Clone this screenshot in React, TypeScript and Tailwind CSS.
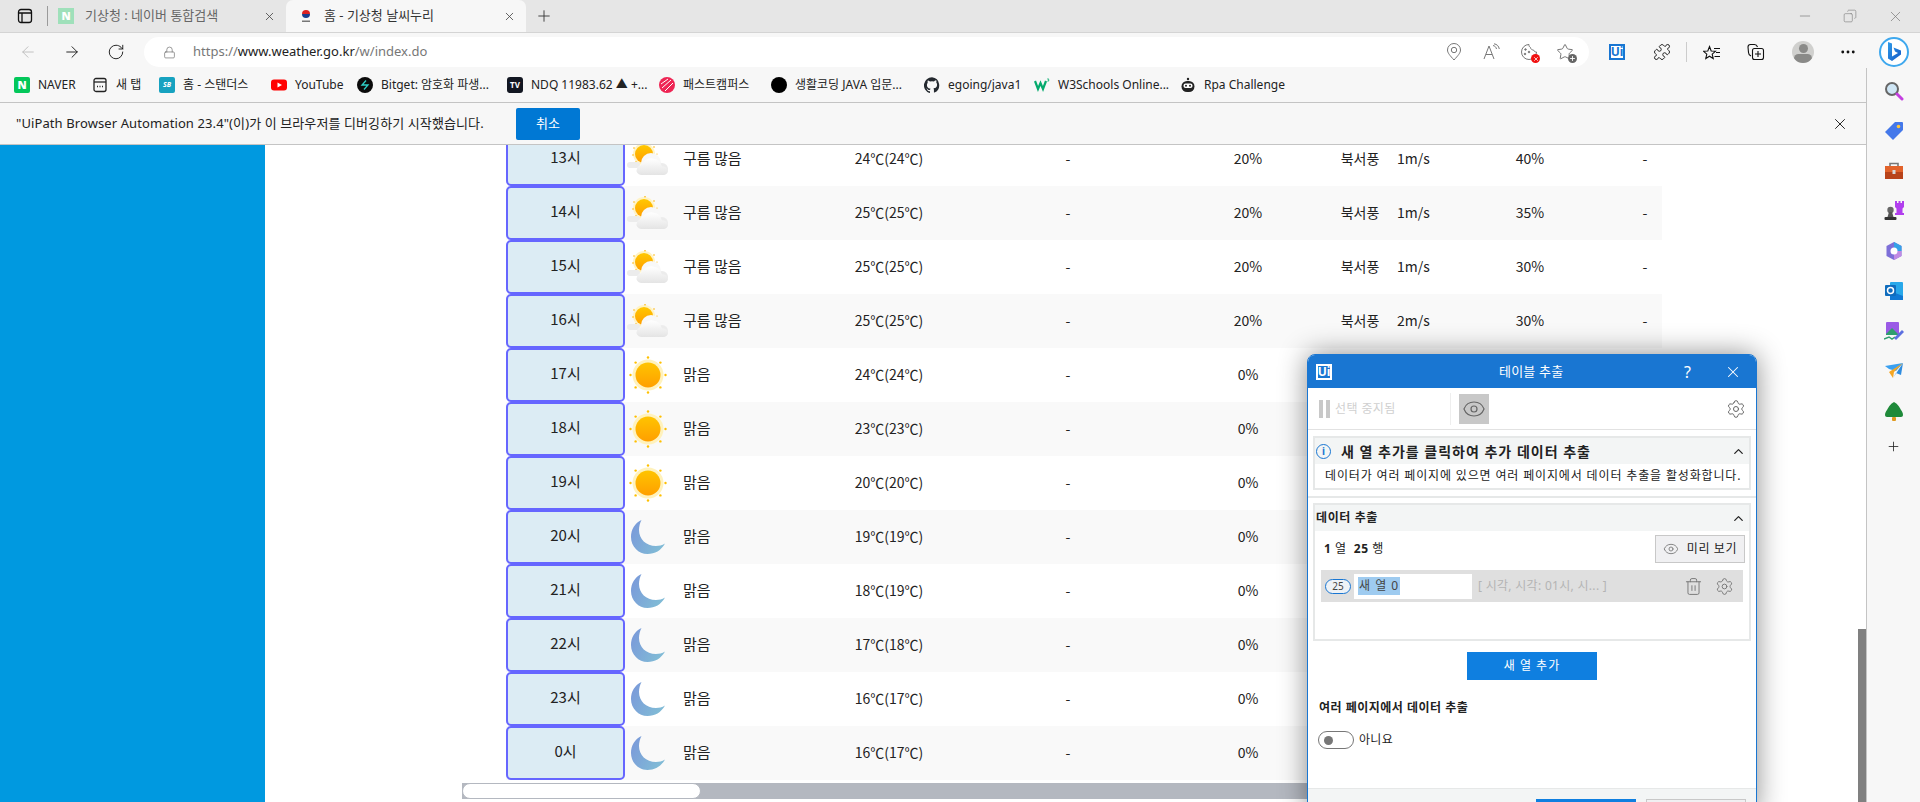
import { ArrowLeft, ArrowRight, ChevronUp, Copy, Eye, Lock, Minus, MoreHorizontal, Plus, Puzzle, RotateCw, Settings, Star, Trash2, X } from "lucide-react";
import type { ReactNode } from "react";

const uiFont = "font-['Noto_Sans','Noto_Sans_CJK_KR',sans-serif]";
const pageFont = "font-['Noto_Sans_CJK_KR','Noto_Sans',sans-serif]";

const CloudSun = () => (
    <svg width="42" height="34" viewBox="0 0 42 34">
        <defs>
            <linearGradient id="sunA" x1="0" y1="0" x2="0" y2="1">
                <stop offset="0" stopColor="#ffc800" />
                <stop offset="1" stopColor="#ff9d00" />
            </linearGradient>
            <linearGradient id="cloudA" x1="0" y1="0" x2="0" y2="1">
                <stop offset="0" stopColor="#ffffff" />
                <stop offset="1" stopColor="#e4e4e4" />
            </linearGradient>
        </defs>
        <circle cx="17" cy="12" r="11" fill="#fff3c4" />
        <circle cx="17" cy="12" r="9" fill="url(#sunA)" />
        <g fill="#ffb400">
            <circle cx="18" cy="0.8" r="0.8" />
            <circle cx="7" cy="6" r="0.8" />
            <circle cx="6" cy="13" r="0.8" />
            <circle cx="9" cy="20" r="0.8" />
            <circle cx="27" cy="5" r="0.8" />
            <circle cx="30" cy="12" r="0.6" />
        </g>
        <rect x="0" y="20" width="13" height="6" rx="3" fill="#ececec" />
        <circle cx="24" cy="21" r="10" fill="#f8f8f8" />
        <circle cx="35" cy="27" r="6" fill="#ececec" />
        <path d="M14 33a4.500 4.500 0 0 1-4-6.500 5 5 0 0 1 5-3.500 10.500 10.500 0 0 1 20 1.500 5 5 0 0 1 6 4.500 4.500 4.500 0 0 1-5 4z" fill="url(#cloudA)" />
    </svg>
);

const Sun = () => (
    <svg width="38" height="38" viewBox="0 0 38 38">
        <defs>
            <linearGradient id="sunB" x1="0" y1="0" x2="0" y2="1">
                <stop offset="0" stopColor="#ffc400" />
                <stop offset="1" stopColor="#ff9f00" />
            </linearGradient>
        </defs>
        <circle cx="19" cy="19" r="15.500" fill="#fff2bd" />
        <circle cx="19" cy="19" r="12.500" fill="url(#sunB)" />
        <g fill="#ffc000">
            <circle cx="19" cy="1.500" r="1.200" />
            <circle cx="19" cy="36.500" r="1.200" />
            <circle cx="1.500" cy="19" r="1.200" />
            <circle cx="36.500" cy="19" r="1.200" />
            <circle cx="6.600" cy="6.600" r="1.200" />
            <circle cx="31.400" cy="6.600" r="1.200" />
            <circle cx="6.600" cy="31.400" r="1.200" />
            <circle cx="31.400" cy="31.400" r="1.200" />
        </g>
    </svg>
);

const Moon = () => (
    <svg width="34" height="34" viewBox="0 0 34 34">
        <defs>
            <linearGradient id="moonA" x1="0" y1="0" x2="1" y2="0.500">
                <stop offset="0" stopColor="#7a97da" />
                <stop offset="1" stopColor="#80bad6" />
            </linearGradient>
        </defs>
        <path d="M10.500 0C4 3 0 9.500 0 17c0 9.500 7.500 17 16.500 17 7.500 0 13.500-3.500 17.500-10.500-3 1.800-6 2.500-9 2.500C15 26 8 19 8 10c0-3.500 1-7 2.500-10z" fill="url(#moonA)" />
    </svg>
);

const UiLogo = ({ className }: { className: string }) => (
    <div className={`flex items-center justify-center border-2 text-[12px] font-bold leading-none ${className}`}>Ui</div>
);

const Taegeuk = () => (
    <svg width="12" height="16" viewBox="0 0 12 16">
        <path d="M2 6a4 4 0 0 1 8 0z" fill="#d22" />
        <path d="M2 6a4 4 0 0 0 8 0z" fill="#1a3f8f" />
        <rect x="2" y="12.500" width="8" height="1.500" fill="#777" />
    </svg>
);

const Mark = ({ className, children }: { className: string; children?: ReactNode }) => (
    <div className={`flex h-4 w-4 shrink-0 items-center justify-center ${className}`}>{children}</div>
);

const bookmarks = [
    { w: "w-[78px]", label: "NAVER", icon: <Mark className="rounded-[2px] bg-[#03c75a] text-[11px] font-black text-white">N</Mark> },
    {
        w: "w-[67px]", label: "새 탭", icon: (
            <svg width="16" height="16" viewBox="0 0 16 16" fill="none" stroke="#222" strokeWidth="1.300">
                <rect x="2" y="1.500" width="12" height="13" rx="2" />
                <path d="M2 5h12" />
                <path d="M5 9.500h1M7.500 9.500h1M10 9.500h1" />
            </svg>
        )
    },
    { w: "w-[112px]", label: "홈 - 스탠더스", icon: <Mark className="rounded-[2px] bg-[#17a2c0] text-[7px] font-bold italic text-white">SB</Mark> },
    {
        w: "w-[86px]", label: "YouTube", icon: (
            <svg width="16" height="16" viewBox="0 0 16 16">
                <rect x="0" y="2.500" width="16" height="11" rx="3" fill="#f00" />
                <path d="M6.500 5.500v5L11 8z" fill="#fff" />
            </svg>
        )
    },
    {
        w: "w-[150px]", label: "Bitget: 암호화 파생...", icon: (
            <svg width="16" height="16" viewBox="0 0 16 16" fill="none">
                <circle cx="8" cy="8" r="8" fill="#0b0b0b" />
                <path d="M9 3.500 5 8h3M7 12.500 11 8H8" stroke="#2fd0c8" strokeWidth="1.300" />
            </svg>
        )
    },
    { w: "w-[152px]", label: "NDQ 11983.62 ▲ +...", icon: <Mark className="rounded-[3px] bg-[#131722] text-[8px] font-bold text-white">TV</Mark> },
    {
        w: "w-[112px]", label: "패스트캠퍼스", icon: (
            <svg width="16" height="16" viewBox="0 0 16 16" fill="none">
                <circle cx="8" cy="8" r="8" fill="#ee2554" />
                <path d="M2 7l7-5M3 11l9-8M6 14l8-8" stroke="#fff" strokeWidth="1" />
            </svg>
        )
    },
    { w: "w-[153px]", label: "생활코딩 JAVA 입문...", icon: <Mark className="rounded-full bg-black" /> },
    {
        w: "w-[110px]", label: "egoing/java1", icon: (
            <svg width="16" height="16" viewBox="0 0 24 24" fill="#24292f">
                <path d="M12 .5a12 12 0 0 0-3.800 23.400c.6.100.8-.3.800-.6v-2.100c-3.300.7-4-1.600-4-1.600-.5-1.400-1.300-1.800-1.300-1.800-1.100-.7.100-.7.100-.7 1.200.1 1.800 1.200 1.800 1.200 1.100 1.800 2.800 1.300 3.500 1 .1-.8.400-1.300.8-1.600-2.700-.3-5.500-1.300-5.500-5.900 0-1.300.5-2.400 1.200-3.200-.1-.3-.5-1.500.1-3.200 0 0 1-.3 3.300 1.200a11.500 11.500 0 0 1 6 0C17.300 4.700 18.300 5 18.300 5c.7 1.700.2 2.900.1 3.200.8.800 1.200 1.900 1.200 3.200 0 4.600-2.800 5.600-5.500 5.900.4.400.8 1.100.8 2.200v3.300c0 .3.200.7.800.6A12 12 0 0 0 12 .5z" />
            </svg>
        )
    },
    {
        w: "w-[146px]", label: "W3Schools Online...", icon: (
            <svg width="16" height="16" viewBox="0 0 16 16" fill="none">
                <path d="M1 4l3 8 2.500-6L9 12l3-8" stroke="#04aa6d" strokeWidth="2.200" />
                <path d="M13 2h2l-1 1.500h1L13.500 5" stroke="#04aa6d" strokeWidth="0.700" />
            </svg>
        )
    },
    {
        w: "w-[110px]", label: "Rpa Challenge", icon: (
            <svg width="16" height="16" viewBox="0 0 16 16">
                <circle cx="8" cy="2" r="1.200" fill="#222" />
                <rect x="1.500" y="4" width="13" height="11" rx="5.500" fill="#222" />
                <rect x="3.500" y="6.500" width="9" height="4.500" rx="2" fill="#fff" />
                <circle cx="6" cy="8.700" r="1" fill="#222" />
                <circle cx="10" cy="8.700" r="1" fill="#222" />
            </svg>
        )
    },
];

const rows = [
    { time: "13시", sky: "cloud", desc: "구름 많음", temp: "24℃(24℃)", pop: "20%", dir: "북서풍", speed: "1m/s", hum: "40%", last: "-" },
    { time: "14시", sky: "cloud", desc: "구름 많음", temp: "25℃(25℃)", pop: "20%", dir: "북서풍", speed: "1m/s", hum: "35%", last: "-" },
    { time: "15시", sky: "cloud", desc: "구름 많음", temp: "25℃(25℃)", pop: "20%", dir: "북서풍", speed: "1m/s", hum: "30%", last: "-" },
    { time: "16시", sky: "cloud", desc: "구름 많음", temp: "25℃(25℃)", pop: "20%", dir: "북서풍", speed: "2m/s", hum: "30%", last: "-" },
    { time: "17시", sky: "sun", desc: "맑음", temp: "24℃(24℃)", pop: "0%" },
    { time: "18시", sky: "sun", desc: "맑음", temp: "23℃(23℃)", pop: "0%" },
    { time: "19시", sky: "sun", desc: "맑음", temp: "20℃(20℃)", pop: "0%" },
    { time: "20시", sky: "moon", desc: "맑음", temp: "19℃(19℃)", pop: "0%" },
    { time: "21시", sky: "moon", desc: "맑음", temp: "18℃(19℃)", pop: "0%" },
    { time: "22시", sky: "moon", desc: "맑음", temp: "17℃(18℃)", pop: "0%" },
    { time: "23시", sky: "moon", desc: "맑음", temp: "16℃(17℃)", pop: "0%" },
    { time: "0시", sky: "moon", desc: "맑음", temp: "16℃(17℃)", pop: "0%" },
];

const SideIcon = ({ children }: { children: ReactNode }) => (
    <div className="flex h-10 w-full items-center justify-center">{children}</div>
);

const Sidebar = () => (
    <aside className="flex w-[54px] shrink-0 flex-col items-center border-l border-[#c4c4c4] bg-[#f7f7f7] pt-[3px]">
        <SideIcon>
            <svg width="20" height="20" viewBox="0 0 20 20" fill="none">
                <circle cx="8" cy="8" r="6" fill="#cfe6f5" stroke="#666" strokeWidth="2" />
                <path d="M13 13l5 5" stroke="#c43fe0" strokeWidth="3" strokeLinecap="round" />
            </svg>
        </SideIcon>
        <SideIcon>
            <svg width="20" height="20" viewBox="0 0 20 20">
                <path d="M11 1h7a1 1 0 0 1 1 1v7L9 19 1 11z" fill="#4478ea" />
                <circle cx="14.500" cy="5.500" r="1.800" fill="#ffc83d" />
            </svg>
        </SideIcon>
        <SideIcon>
            <svg width="20" height="20" viewBox="0 0 20 20">
                <path d="M6 5V2.500h8V5" fill="none" stroke="#777" strokeWidth="1.600" />
                <rect x="1" y="5" width="18" height="6" fill="#e2622a" />
                <rect x="1" y="11" width="18" height="7" fill="#b8431a" />
                <rect x="8.500" y="9" width="3" height="4" fill="#d8d8d8" />
            </svg>
        </SideIcon>
        <SideIcon>
            <svg width="20" height="20" viewBox="0 0 20 20">
                <circle cx="6.500" cy="9" r="3.200" fill="#666" />
                <path d="M5 11h3l1.500 5h-6z" fill="#555" />
                <rect x="0.500" y="16" width="12" height="3" rx="1" fill="#333" />
                <path d="M11 0h2v2h1.500V0h2v2H18V0h2v6l-1.500 1.500V12H20v2h-9v-2h1.500V7.500L11 6z" fill="#b13fee" />
            </svg>
        </SideIcon>
        <SideIcon>
            <svg width="20" height="20" viewBox="0 0 20 20" fill="none">
                <path d="M10 1l7.500 4v10L10 19l-7.500-4V5z" fill="#7d6fd8" />
                <path d="M10 1l7.500 4v5H10z" fill="#35a2e8" />
                <path d="M10 19l7.500-4v-5H10z" fill="#c08be4" />
                <circle cx="10" cy="10" r="3.500" fill="#fff" />
            </svg>
        </SideIcon>
        <SideIcon>
            <svg width="20" height="20" viewBox="0 0 20 20">
                <rect x="6" y="1" width="13" height="18" rx="1" fill="#28a8ea" />
                <path d="M6 10l13 5v4H6z" fill="#0f78d4" />
                <rect x="1" y="4" width="11" height="11" rx="1" fill="#0f6cbd" />
                <circle cx="6.500" cy="9.500" r="3" fill="none" stroke="#fff" strokeWidth="1.500" />
            </svg>
        </SideIcon>
        <SideIcon>
            <svg width="20" height="20" viewBox="0 0 20 20">
                <rect x="2" y="1" width="13" height="13" rx="1" fill="#9a5ae6" />
                <path d="M2 13l6-6 6 6v1H2z" fill="#2f9e6e" />
                <path d="M0 18l5-2 3 2 3-2" fill="none" stroke="#2f9e6e" strokeWidth="1.500" />
                <path d="M10 17l8-8 2 2-8 8z" fill="#5c6fe0" />
            </svg>
        </SideIcon>
        <SideIcon>
            <svg width="20" height="20" viewBox="0 0 20 20">
                <path d="M1 5l18-3-7 8-7-2z" fill="#3aa0f0" />
                <path d="M5 11l14-9-9 9-1 6z" fill="#f5a623" />
                <path d="M9 17l3-5 5 2 2-12z" fill="#2e8ce0" />
            </svg>
        </SideIcon>
        <SideIcon>
            <svg width="20" height="20" viewBox="0 0 20 20">
                <path d="M10 1C6 3 4 7 3 9c-1 1-2 3-2 5 0 2 2 2 3 2h12c1 0 3 0 3-2 0-2-1-4-2-5-1-2-3-6-7-8z" fill="#1f8a3a" />
                <rect x="8" y="16" width="4" height="4" rx="1" fill="#e09a1f" />
            </svg>
        </SideIcon>
        <div className="mt-[5px] flex h-5 items-center justify-center">
            <Plus className="h-[15px] w-[15px] text-[#222]" strokeWidth={1.300} />
        </div>
    </aside>
);

const Dialog = () => (
    <div className={`absolute top-[209px] left-[1307px] flex h-[460px] w-[450px] flex-col overflow-hidden rounded-t-[8px] border border-[#1976d2] bg-white text-[#222] shadow-[0_0_28px_rgba(0,0,0,0.45)] ${uiFont}`}>
        <div className="flex h-[33px] shrink-0 items-center bg-[#1976d2] pl-2 pr-[14px] text-white">
            <UiLogo className="h-4 w-4 border-white text-white" />
            <span className="ml-[167px] text-[13px] tracking-[0.2px]">테이블 추출</span>
            <span className="ml-auto text-[16px]">?</span>
            <X className="ml-[33px] h-[18px] w-[18px]" strokeWidth={1.400} />
        </div>
        <div className="flex h-[42px] shrink-0 items-center border-b border-[#e2e2e2] pl-[11px] pr-[10px]">
            <div className="flex w-[16px] gap-[3px]">
                <span className="h-[18px] w-[4px] bg-[#c8c8c8]" />
                <span className="h-[18px] w-[4px] bg-[#c8c8c8]" />
            </div>
            <span className="text-[12px] tracking-[0.4px] text-[#d0d0d0]">선택 중지됨</span>
            <div className="mx-2 ml-[54px] h-[32px] w-px bg-[#eeeeee]" />
            <div className="flex h-[30px] w-[30px] items-center justify-center bg-[#c8c8c8]">
                <Eye className="h-[24px] w-[24px] text-[#666]" strokeWidth={1.200} />
            </div>
            <Settings className="ml-auto h-[20px] w-[20px] text-[#666]" strokeWidth={1.200} />
        </div>
        <div className="mx-[5px] mt-[6px] shrink-0 border-2 border-[#e6e8e8]">
            <div className="flex h-[26px] items-center bg-[#f3f5f5] pl-[1px] pr-[3px]">
                <div className="flex h-[15px] w-[15px] items-center justify-center rounded-full border border-[#1976d2] text-[10px] font-bold leading-none text-[#1976d2]">i</div>
                <span className="ml-[10px] text-[14px] font-bold tracking-[1px] text-[#222]">새 열 추가를 클릭하여 추가 데이터 추출</span>
                <ChevronUp className="ml-auto h-[15px] w-[15px]" />
            </div>
            <div className="flex h-[24px] items-center pl-[10px] text-[12px] tracking-[0.85px] whitespace-nowrap">데이터가 여러 페이지에 있으면 여러 페이지에서 데이터 추출을 활성화합니다.</div>
        </div>
        <div className="mt-[6px] h-[2px] shrink-0 bg-[#e6e8e8]" />
        <div className="mx-[5px] mt-[5px] flex h-[138px] shrink-0 flex-col border-2 border-[#e6e8e8]">
            <div className="flex h-[26px] shrink-0 items-center bg-[#f3f5f5] pl-[1px] pr-[3px]">
                <span className="text-[12px] font-bold tracking-[0.6px]">데이터 추출</span>
                <ChevronUp className="ml-auto h-[15px] w-[15px]" />
            </div>
            <div className="flex h-[32px] shrink-0 items-center justify-between pl-[9px] pr-[4px] pt-[4px]">
                <span className="text-[12px] tracking-[0.5px]"><b>1</b> 열&nbsp; <b>25</b> 행</span>
                <div className="flex h-[28px] w-[90px] items-center justify-center gap-[8px] border border-[#c8c8c8] bg-[#f0f0f2] text-[12px] tracking-[0.6px]">
                    <Eye className="h-[16px] w-[16px] text-[#777]" strokeWidth={1.300} />
                    미리 보기
                </div>
            </div>
            <div className="mx-[6px] mt-[7px] flex h-[32px] shrink-0 items-center bg-[#dfdfdf] pl-[4px] pr-[9px]">
                <span className="flex h-[15px] w-[26px] items-center justify-center rounded-full border border-[#1976d2] bg-[#eef2f6] text-[10px] text-[#444]">25</span>
                <div className="ml-[3px] flex h-[25px] w-[118px] items-center bg-white pl-[4px] text-[12px]">
                    <span className="bg-[#9ecbf0] px-[1px] tracking-[1px] text-[#444]">새 열 0</span>
                </div>
                <span className="ml-[6px] text-[12px] tracking-[0.3px] text-[#b4b4b4]">[ 시각, 시각: 01시, 시... ]</span>
                <Trash2 className="ml-auto h-[19px] w-[19px] text-[#777]" strokeWidth={1.200} />
                <Settings className="ml-[12px] h-[19px] w-[19px] text-[#777]" strokeWidth={1.200} />
            </div>
        </div>
        <div className="mx-auto mt-[11px] flex h-[28px] w-[130px] shrink-0 items-center justify-center bg-[#0f7fe0] text-[12px] tracking-[1px] text-white">새 열 추가</div>
        <div className="mt-[20px] shrink-0 pl-[11px] text-[12px] font-semibold leading-4 tracking-[0.5px]">여러 페이지에서 데이터 추출</div>
        <div className="mt-[15px] flex h-[18px] shrink-0 items-center gap-[5px] pl-[10px]">
            <div className="flex h-[18px] w-[36px] items-center rounded-full border border-[#777] pl-[5px]">
                <span className="h-[9px] w-[9px] rounded-full bg-[#777]" />
            </div>
            <span className="text-[12px] tracking-[0.3px]">아니요</span>
        </div>
        <div className="mt-[39px] flex flex-1 gap-[10px] border-t border-[#e6e8e8] bg-[#f3f5f5] pl-[228px] pt-[10px]">
            <div className="h-[32px] w-[100px] bg-[#0f7fe0]" />
            <div className="h-[32px] w-[100px] border border-[#c8c8c8] bg-[#f0f0f2]" />
        </div>
    </div>
);

export default function App() {
    return (
        <div className={`flex h-[802px] w-[1920px] flex-col overflow-hidden bg-white ${uiFont}`}>
            {/* Tab strip */}
            <div className="flex h-8 shrink-0 items-stretch bg-[#e6e6e6]">
                <div className="flex w-[47px] items-center justify-end pr-[14px]">
                    <svg width="16" height="16" viewBox="0 0 16 16" fill="none" stroke="#111" strokeWidth="1.300">
                        <rect x="1.500" y="1.500" width="13" height="13" rx="2.500" />
                        <path d="M1.500 5h13M5 5v9.500" />
                    </svg>
                </div>
                <div className="my-[6px] w-px bg-[#9a9a9a]" />
                <div className="flex w-[238px] items-center pl-[10px] pr-[10px]">
                    <Mark className="bg-[#9fe0ba] text-[11px] font-black text-white">N</Mark>
                    <span className="ml-[11px] text-[13px] text-[#666]">기상청 : 네이버 통합검색</span>
                    <X className="ml-auto h-[13px] w-[13px] text-[#444]" strokeWidth={1.500} />
                </div>
                <div className="flex w-[240px] items-center rounded-t-[7px] bg-[#f7f7f7] pl-[14px] pr-[10px]">
                    <Taegeuk />
                    <span className="ml-[12px] text-[13px] text-[#333]">홈 - 기상청 날씨누리</span>
                    <X className="ml-auto h-[13px] w-[13px] text-[#444]" strokeWidth={1.500} />
                </div>
                <div className="flex w-[36px] items-center justify-center">
                    <Plus className="h-[18px] w-[18px] text-[#333]" strokeWidth={1.200} />
                </div>
                <div className="ml-auto flex items-center gap-[30px] pr-[16px] text-[#777]">
                    <Minus className="h-4 w-4" strokeWidth={1} />
                    <Copy className="h-[14px] w-[14px] scale-x-[-1]" strokeWidth={1} />
                    <X className="h-[17px] w-[17px]" strokeWidth={1} />
                </div>
            </div>

            {/* Toolbar */}
            <div className="flex h-[36px] shrink-0 items-center border-t border-[#d4d4d4] bg-[#f7f7f7] pt-[3px]">
                <div className="flex w-[144px] items-center pl-[19px] text-[#111]">
                    <ArrowLeft className="h-[18px] w-[18px] text-[#bbbbbb]" strokeWidth={1.200} />
                    <ArrowRight className="ml-[26px] h-[18px] w-[18px]" strokeWidth={1.200} />
                    <RotateCw className="ml-[26px] h-[18px] w-[18px]" strokeWidth={1.200} />
                </div>
                <div className="flex h-[30px] w-[1445px] items-center rounded-full bg-white pl-[19px] pr-[15px] text-[#666]">
                    <Lock className="h-[15px] w-[13px]" strokeWidth={1.200} />
                    <span className="ml-[17px] text-[13px] text-[#777]">https://<span className="text-[#222]">www.weather.go.kr</span>/w/index.do</span>
                    {/* pin */}
                    <svg className="ml-auto" width="16" height="18" viewBox="0 0 16 18" fill="none" stroke="#777" strokeWidth="1">
                        <path d="M8 17C4 12.500 1.500 10 1.500 7a6.500 6.500 0 0 1 13 0c0 3-2.500 5.500-6.500 10z" />
                        <circle cx="8" cy="7" r="2.700" />
                    </svg>
                    {/* read aloud */}
                    <svg className="ml-[21px]" width="18" height="18" viewBox="0 0 18 18" fill="none" stroke="#777" strokeWidth="1">
                        <path d="M1 16 6 3l5 13M3 11.500h6" />
                        <path d="M10 2.500c2 .5 3 1.500 3.500 3.500M11 .8c3 .5 4.700 2.200 5.300 5.200" />
                    </svg>
                    {/* cookie blocked */}
                    <div className="relative ml-[19px]">
                        <svg width="18" height="18" viewBox="0 0 18 18" fill="none" stroke="#777" strokeWidth="1">
                            <path d="M9 1.500a7.500 7.500 0 1 0 7.500 7.500c-1.500 0-2.500-.7-3-2-1.500 0-3-1-3-2.500C9.500 4 8.800 3 9 1.500z" />
                            <circle cx="5.500" cy="6.500" r=".8" fill="#777" />
                            <circle cx="5" cy="11" r=".8" fill="#777" />
                            <circle cx="9" cy="9" r=".8" fill="#777" />
                        </svg>
                        <span className="absolute -right-[2px] -bottom-[2px] flex h-[9px] w-[9px] items-center justify-center rounded-full bg-[#f01010]">
                            <X className="h-[6px] w-[6px] text-white" strokeWidth={3} />
                        </span>
                    </div>
                    {/* add favourite */}
                    <div className="relative ml-[18px]">
                        <Star className="h-[18px] w-[18px]" strokeWidth={1.200} />
                        <span className="absolute -right-[3px] -bottom-[2px] flex h-[9px] w-[9px] items-center justify-center rounded-full bg-[#666]">
                            <Plus className="h-[7px] w-[7px] text-white" strokeWidth={3} />
                        </span>
                    </div>
                </div>
                <UiLogo className="ml-[20px] h-4 w-4 border-[#1976d2] bg-white text-[#1976d2]" />
                <Puzzle className="ml-[28px] h-[18px] w-[18px] text-[#111]" strokeWidth={1.200} />
                <div className="ml-[15px] h-[20px] w-px bg-[#cccccc]" />
                {/* favourites */}
                <svg className="ml-[16px]" width="18" height="18" viewBox="0 0 18 18" fill="none" stroke="#111" strokeWidth="1.100">
                    <path d="M6 1.500 7.700 6l4.300.3-3.300 2.900 1 4.300L6 11.200 2.300 13.500l1-4.300L0 6.300 4.300 6z" transform="translate(.5 2)" />
                    <path d="M11 5.500h6M13 9.500h4M11.500 13.500H17" />
                </svg>
                {/* collections */}
                <svg className="ml-[26px]" width="18" height="18" viewBox="0 0 18 18" fill="none" stroke="#111" strokeWidth="1.100">
                    <path d="M4 13C2 12 1.500 11 1.500 9.500L1 4c0-1.500 1-2.500 2.500-2.500h4c1.500 0 2.500 1 3 2.500" />
                    <rect x="5.500" y="5.500" width="11" height="11" rx="2" />
                    <path d="M11 8v6M8 11h6" />
                </svg>
                <div className="ml-[27px] flex h-[22px] w-[22px] flex-col items-center overflow-hidden rounded-full bg-[#d0d0ce] pt-[3px]">
                    <span className="h-[9px] w-[9px] rounded-full bg-[#8a8a88]" />
                    <span className="mt-[1px] h-[10px] w-[18px] rounded-full bg-[#8a8a88]" />
                </div>
                <MoreHorizontal className="ml-[25px] h-[18px] w-[18px] text-[#111]" strokeWidth={1.800} />
                <div className="ml-[22px] flex h-[30px] w-[30px] items-center justify-center rounded-full border-2 border-[#3ea8ee] bg-white">
                    <svg width="16" height="22" viewBox="0 0 16 22">
                        <defs>
                            <linearGradient id="bing" x1="0" y1="0" x2="1" y2="1">
                                <stop offset="0" stopColor="#2f9be8" />
                                <stop offset="1" stopColor="#1459c7" />
                            </linearGradient>
                        </defs>
                        <path d="M2 1l4 1.500v13l6-3.500-3-1.500-1.500-4 7.500 3v4L6 20l-4-2.500z" fill="url(#bing)" />
                    </svg>
                </div>
            </div>

            <div className="flex min-h-0 flex-1">
                <div className="relative flex min-w-0 flex-1 flex-col">
                    {/* Bookmarks */}
                    <div className="flex h-[34px] shrink-0 items-center bg-[#f7f7f7] pl-[14px] text-[12px] text-[#222]">
                        {bookmarks.map((b) => (
                            <div key={b.label} className={`flex shrink-0 items-center gap-[8px] whitespace-nowrap ${b.w}`}>
                                {b.icon}
                                <span>{b.label}</span>
                            </div>
                        ))}
                    </div>
                    {/* Debugging bar */}
                    <div className="flex h-[43px] shrink-0 items-center border-y border-[#c4c4c4] bg-[#f7f7f7] pl-4 pr-[17px] text-[13px] text-[#222]">
                        <span className="w-[500px] whitespace-nowrap tracking-[0.1px]">"UiPath Browser Automation 23.4"(이)가 이 브라우저를 디버깅하기 시작했습니다.</span>
                        <div className="flex h-8 w-16 items-center justify-center rounded-[2px] bg-[#0078d4] text-white">취소</div>
                        <X className="ml-auto h-[18px] w-[18px] text-[#111]" strokeWidth={1.200} />
                    </div>
                    {/* Page */}
                    <div className="relative flex min-h-0 flex-1 overflow-hidden">
                        <div className="w-[265px] shrink-0 bg-[#0099e0]" />
                        <div className={`min-w-0 flex-1 ${pageFont}`}>
                            <div className="-mt-[13px] ml-[241px] w-[1156px] text-[14px] text-[#222]">
                                {rows.map((r, i) => (
                                    <div key={r.time} className={`grid h-[54px] grid-cols-[119px_50px_125px_178px_180px_180px_44px_68px_160px_52px] items-center ${i % 2 === 1 ? "bg-[#f9f9f9]" : "bg-white"}`}>
                                        <div className="flex h-full items-center justify-center rounded-[5px] border-2 border-[#6666ff] bg-[#dcecf4] pb-[4px] text-[15px]">{r.time}</div>
                                        <div className="flex items-center justify-center pr-[4px]">
                                            {r.sky === "cloud" && <CloudSun />}
                                            {r.sky === "sun" && <Sun />}
                                            {r.sky === "moon" && <Moon />}
                                        </div>
                                        <div className="pb-[2px] pl-2 text-[15px]">{r.desc}</div>
                                        <div className="pb-[2px] text-center">{r.temp}</div>
                                        <div className="pb-[2px] text-center">-</div>
                                        <div className="pb-[2px] text-center">{r.pop}</div>
                                        <div className="pb-[2px] text-center">{r.dir}</div>
                                        <div className="pb-[2px] pl-[15px]">{r.speed}</div>
                                        <div className="pb-[2px] text-center">{r.hum}</div>
                                        <div className="pb-[2px] pl-[18px] text-center">{r.last}</div>
                                    </div>
                                ))}
                            </div>
                            <div className="mt-[3px] ml-[197px] flex h-4 w-[1240px] bg-[#b4b8c0]">
                                <div className="h-full w-[239px] rounded-full border border-[#b4b8c0] bg-white" />
                            </div>
                        </div>
                        {/* Page scrollbar */}
                        <div className="flex w-2 shrink-0 flex-col justify-end bg-white">
                            <div className="h-[173px] bg-[#808080]" />
                        </div>
                        <Dialog />
                    </div>
                </div>
                <Sidebar />
            </div>
        </div>
    );
}
